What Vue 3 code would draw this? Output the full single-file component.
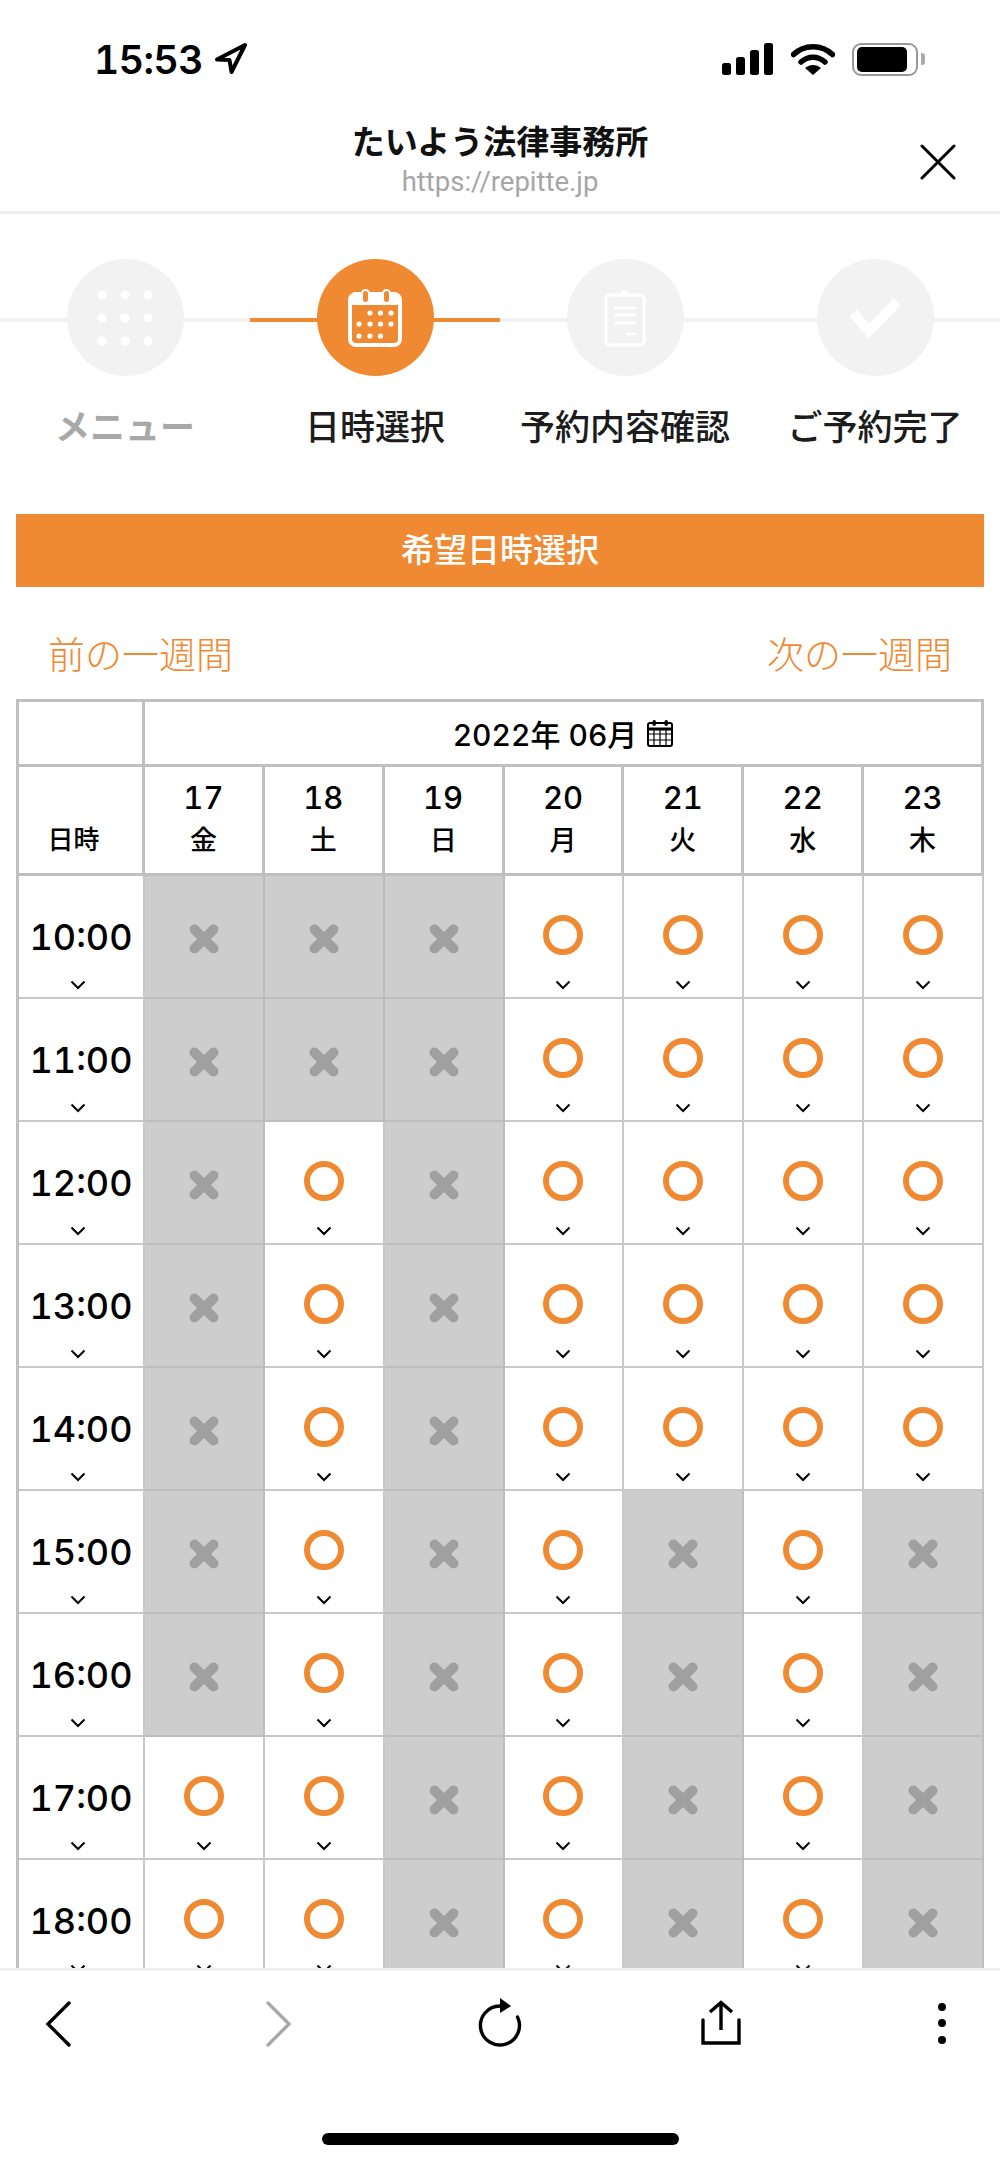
<template>
  <div class="page">
    <!-- status bar -->
    <div class="status">
      <div class="status-left">
        <span class="clock">15:53</span>
        <svg class="loc" width="34" height="33" viewBox="0 0 34 33">
          <path d="M31 3 L3 17.5 L15.5 18 L17.5 30 Z" fill="none" stroke="#000" stroke-width="4" stroke-linejoin="round" />
        </svg>
      </div>
      <div class="status-right">
        <svg width="52" height="32" viewBox="0 0 52 32">
          <rect x="0" y="20" width="9" height="12" rx="2.5" />
          <rect x="14" y="14" width="9" height="18" rx="2.5" />
          <rect x="28" y="7" width="9" height="25" rx="2.5" />
          <rect x="42" y="0" width="9" height="32" rx="2.5" />
        </svg>
        <svg width="44" height="32" viewBox="0 0 44 32">
          <path d="M2.5 11.5 C13 1 31 1 41.5 11.5" fill="none" stroke="#000" stroke-width="5.5" stroke-linecap="round" />
          <path d="M10 19 C17 12.5 27 12.5 34 19" fill="none" stroke="#000" stroke-width="5.5" stroke-linecap="round" />
          <path d="M14 25 C19 21 25 21 30 25 L22 32 Z" />
        </svg>
        <div class="battery"><div class="battery-fill"></div></div>
        <div class="battery-nub"></div>
      </div>
    </div>

    <!-- browser header -->
    <header class="top">
      <div class="top-title">たいよう法律事務所</div>
      <div class="top-url">https://repitte.jp</div>
      <svg class="top-close" width="36" height="36" viewBox="0 0 36 36">
        <path d="M2 2 L34 34 M34 2 L2 34" stroke="#000" stroke-width="3" stroke-linecap="round" />
      </svg>
    </header>

    <main class="content">
      <!-- steps -->
      <div class="steps">
        <div v-for="(s, i) in steps" :key="s" class="step" :class="{ active: i === 1 }">
          <div class="step-circle">
            <svg v-if="i === 0" width="64" height="64" viewBox="0 0 64 64" fill="#fff">
              <template v-for="y in [9, 32, 55]" :key="y">
                <circle v-for="x in [9, 32, 55]" :key="x" :cx="x" :cy="y" r="4.6" />
              </template>
            </svg>
            <svg v-else-if="i === 1" width="54" height="58" viewBox="0 0 54 58">
              <rect x="2" y="5" width="50" height="51" rx="6" fill="none" stroke="#fff" stroke-width="4" />
              <rect x="2" y="5" width="50" height="11" rx="4" fill="#fff" />
              <rect x="14" y="1" width="7" height="13" rx="3.5" fill="#ef8a33" stroke="#fff" stroke-width="2" />
              <rect x="35" y="1" width="7" height="13" rx="3.5" fill="#ef8a33" stroke="#fff" stroke-width="2" />
              <circle v-for="d in calDots" :key="d[0] + '-' + d[1]" :cx="d[0]" :cy="d[1]" r="2.6" fill="#fff" />
            </svg>
            <svg v-else-if="i === 2" width="42" height="58" viewBox="0 0 42 58">
              <rect x="2" y="6" width="38" height="50" rx="4" fill="none" stroke="#fff" stroke-width="3" />
              <path d="M15 6 L19 1 H23 L27 6 Z" fill="#fff" />
              <path d="M10 19 H32 M10 26 H32 M10 34 H32 M22 45 H32" stroke="#fff" stroke-width="2.4" />
            </svg>
            <svg v-else width="54" height="40" viewBox="0 0 54 40">
              <path d="M5 15 L21 33 L49 4" fill="none" stroke="#fff" stroke-width="10" />
            </svg>
          </div>
          <div class="step-label">{{ s }}</div>
        </div>
      </div>

      <div class="banner">希望日時選択</div>

      <div class="week-nav">
        <span>前の一週間</span>
        <span>次の一週間</span>
      </div>

      <!-- availability table -->
      <div class="grid">
        <div class="head-cell corner"></div>
        <div class="head-cell month">
          <span>2022年 06月</span>
          <svg width="26" height="28" viewBox="0 0 26 28" fill="none" stroke="#000">
            <rect x="1" y="4" width="24" height="23" rx="2" stroke-width="2" />
            <path d="M1 10 H25" stroke-width="3" />
            <path d="M1 15 H25 M1 21 H25 M7 10 V27 M13 10 V27 M19 10 V27" stroke-width="1.2" />
            <rect x="5.5" y="1" width="3.4" height="6" rx="1.7" fill="#000" stroke="none" />
            <rect x="17.5" y="1" width="3.4" height="6" rx="1.7" fill="#000" stroke="none" />
          </svg>
        </div>
        <div class="head-cell day-label">日時</div>
        <div v-for="d in days" :key="d.date" class="head-cell day">
          <span class="day-num">{{ d.date }}</span>
          <span class="day-week">{{ d.week }}</span>
        </div>

        <template v-for="(t, r) in times" :key="t">
          <div class="cell time">
            <span class="time-text">{{ t }}</span>
            <svg class="chev" width="16" height="10" viewBox="0 0 16 10">
              <path d="M1.5 1.5 L8 8 L14.5 1.5" fill="none" stroke="#000" stroke-width="2" />
            </svg>
          </div>
          <template v-for="d in days" :key="d.date">
            <div v-if="d.open[r]" class="cell slot">
              <div class="ring"></div>
              <svg class="chev" width="16" height="10" viewBox="0 0 16 10">
                <path d="M1.5 1.5 L8 8 L14.5 1.5" fill="none" stroke="#000" stroke-width="2" />
              </svg>
            </div>
            <div v-else class="cell closed">
              <svg width="32" height="32" viewBox="0 0 32 32">
                <path d="M6.5 6.5 L25.5 25.5 M25.5 6.5 L6.5 25.5" stroke="#a0a0a0" stroke-width="10" stroke-linecap="round" />
              </svg>
            </div>
          </template>
        </template>
      </div>
    </main>

    <!-- browser toolbar -->
    <footer class="bottom">
      <div class="tools">
        <svg width="44" height="52" viewBox="0 0 44 52">
          <path d="M33 5 L12 26 L33 47" fill="none" stroke="#000" stroke-width="3.4" stroke-linecap="round" />
        </svg>
        <svg width="44" height="52" viewBox="0 0 44 52">
          <path d="M11 5 L32 26 L11 47" fill="none" stroke="#aaa" stroke-width="3.4" stroke-linecap="round" />
        </svg>
        <svg width="44" height="52" viewBox="0 0 44 52">
          <path d="M22 8 A19.5 19.5 0 1 0 39.5 19" fill="none" stroke="#000" stroke-width="3.4" stroke-linecap="round" />
          <path d="M22 0 L33 8 L22 15 Z" />
        </svg>
        <svg width="44" height="52" viewBox="0 0 44 52">
          <path d="M22 32 V6 M11 14 L22 4.5 L33 14" fill="none" stroke="#000" stroke-width="3.4" />
          <path d="M4 22 V45 H40 V22" fill="none" stroke="#000" stroke-width="3.4" stroke-linecap="round" />
        </svg>
        <svg width="44" height="52" viewBox="0 0 44 52">
          <circle cx="22" cy="9" r="4" />
          <circle cx="22" cy="25" r="4" />
          <circle cx="22" cy="42" r="4" />
        </svg>
      </div>
      <div class="home-bar"></div>
    </footer>
  </div>
</template>

<script setup>
const steps = ['メニュー', '日時選択', '予約内容確認', 'ご予約完了']

const calDots = [
  [22, 24], [32.5, 24], [43, 24],
  [11, 35], [22, 35], [32.5, 35], [43, 35],
  [11, 47], [22, 47], [32.5, 47]
]

const times = ['10:00', '11:00', '12:00', '13:00', '14:00', '15:00', '16:00', '17:00', '18:00']

const days = [
  { date: 17, week: '金', open: [0, 0, 0, 0, 0, 0, 0, 1, 1] },
  { date: 18, week: '土', open: [0, 0, 1, 1, 1, 1, 1, 1, 1] },
  { date: 19, week: '日', open: [0, 0, 0, 0, 0, 0, 0, 0, 0] },
  { date: 20, week: '月', open: [1, 1, 1, 1, 1, 1, 1, 1, 1] },
  { date: 21, week: '火', open: [1, 1, 1, 1, 1, 0, 0, 0, 0] },
  { date: 22, week: '水', open: [1, 1, 1, 1, 1, 1, 1, 1, 1] },
  { date: 23, week: '木', open: [1, 1, 1, 1, 1, 0, 0, 0, 0] }
]
</script>

<style>
html,
body {
  margin: 0;
  background: #fff;
}
</style>

<style scoped>
.page {
  width: 1000px;
  height: 2164px;
  display: flex;
  flex-direction: column;
  overflow: hidden;
  background: #fff;
  color: #000;
  font-family: Inter, "Noto Sans CJK JP", sans-serif;
  font-variant-numeric: tabular-nums;
}

.status {
  height: 100px;
  flex: none;
  display: flex;
  justify-content: space-between;
  padding: 42px 75px 0 94px;
  box-sizing: border-box;
}

.status-left {
  display: flex;
  align-items: flex-start;
  gap: 11px;
}

.clock {
  font-size: 39px;
  line-height: 36px;
  font-weight: 600;
  letter-spacing: -0.5px;
}

.status-right {
  display: flex;
  align-items: center;
  height: 34px;
  gap: 17px;
}

.battery {
  width: 66px;
  height: 33px;
  box-sizing: border-box;
  border: 2.5px solid #999;
  border-radius: 9px;
  padding: 2.5px 9px 2px 3px;
}

.battery-fill {
  height: 100%;
  background: #000;
  border-radius: 5px;
}

.battery-nub {
  width: 4px;
  height: 12px;
  margin-left: -14px;
  background: #aaa;
  border-radius: 0 3px 3px 0;
}

.top {
  position: relative;
  height: 114px;
  flex: none;
  box-sizing: border-box;
  border-bottom: 3px solid #f0f0f0;
  text-align: center;
}

.top-title {
  padding-top: 22px;
  font-size: 33px;
  line-height: 40px;
  font-weight: 700;
  color: #111;
}

.top-url {
  margin-top: 2px;
  font-family: Roboto, sans-serif;
  font-size: 27.5px;
  line-height: 36px;
  color: #a6a6a6;
}

.top-close {
  position: absolute;
  top: 44px;
  right: 44px;
}

.content {
  flex: 1;
  min-height: 0;
  overflow: hidden;
}

.steps {
  display: grid;
  grid-template-columns: repeat(4, 250px);
  padding-top: 45px;
}

.step {
  position: relative;
  display: flex;
  flex-direction: column;
  align-items: center;
}

.step::before {
  content: "";
  position: absolute;
  top: 59px;
  left: 0;
  right: 0;
  height: 4px;
  background: #f2f2f2;
}

.step.active::before {
  background: #ef8a33;
}

.step-circle {
  position: relative;
  width: 117px;
  height: 117px;
  border-radius: 50%;
  background: #f2f2f2;
  display: flex;
  align-items: center;
  justify-content: center;
}

.step.active .step-circle {
  background: #ef8a33;
}

.step-label {
  margin-top: 31px;
  font-size: 35px;
  line-height: 40px;
  font-weight: 500;
  color: #1c1c1c;
  white-space: nowrap;
}

.step:first-child .step-label {
  color: #a8a8a8;
  font-weight: 700;
}

.banner {
  margin: 67px 16px 0;
  height: 73px;
  background: #ef8a33;
  color: #fff;
  font-size: 33px;
  line-height: 73px;
  text-align: center;
  font-weight: 500;
}

.week-nav {
  margin-top: 44px;
  padding: 0 48px;
  height: 44px;
  display: flex;
  justify-content: space-between;
  align-items: center;
  font-size: 37px;
  font-weight: 300;
  color: #ef8a33;
}

.grid {
  margin: 24px 16px 0;
  display: grid;
  grid-template-columns: 126px repeat(7, 1fr);
  grid-template-rows: 65px 109px;
  grid-auto-rows: 123px;
  border-left: 3px solid #c0c0c0;
  border-top: 3px solid #c0c0c0;
}

.head-cell {
  box-sizing: border-box;
  border-right: 3px solid #c0c0c0;
  border-bottom: 3px solid #c0c0c0;
}

.month {
  grid-column: span 7;
  display: flex;
  align-items: center;
  justify-content: center;
  gap: 10px;
  font-size: 30px;
  font-weight: 500;
}

.day-label {
  display: flex;
  align-items: flex-end;
  justify-content: center;
  padding: 0 14px 15px 0;
  font-size: 26px;
  line-height: 36px;
  font-weight: 500;
}

.day {
  display: flex;
  flex-direction: column;
  align-items: center;
  padding-top: 13px;
}

.day-num {
  font-size: 31px;
  line-height: 36px;
  font-weight: 500;
}

.day-week {
  margin-top: 7px;
  font-size: 27px;
  line-height: 36px;
  font-weight: 500;
}

.cell {
  box-sizing: border-box;
  border-right: 2px solid #c8c8c8;
  border-bottom: 2px solid #c8c8c8;
  display: flex;
  flex-direction: column;
  align-items: center;
}

.chev {
  flex: none;
}

.time {
  padding-top: 41px;
}

.time-text {
  font-size: 36px;
  line-height: 40px;
  font-weight: 500;
}

.time .chev {
  margin: 23px 6px 0 0;
}

.slot {
  padding-top: 39px;
}

.ring {
  width: 40px;
  height: 40px;
  box-sizing: border-box;
  border: 6px solid #ef8a33;
  border-radius: 50%;
}

.slot .chev {
  margin-top: 25px;
}

.closed {
  background: #cdcdcd;
  border-color: #bdbdbd;
  padding-top: 47px;
}

.bottom {
  height: 196px;
  flex: none;
  box-sizing: border-box;
  border-top: 3px solid #f0f0f0;
  padding-top: 27px;
  background: #fff;
  display: flex;
  flex-direction: column;
  align-items: center;
}

.tools {
  width: 100%;
  box-sizing: border-box;
  padding: 0 36px;
  display: flex;
  justify-content: space-between;
}

.home-bar {
  width: 357px;
  height: 12px;
  margin-top: 83px;
  background: #000;
  border-radius: 6px;
}
</style>
